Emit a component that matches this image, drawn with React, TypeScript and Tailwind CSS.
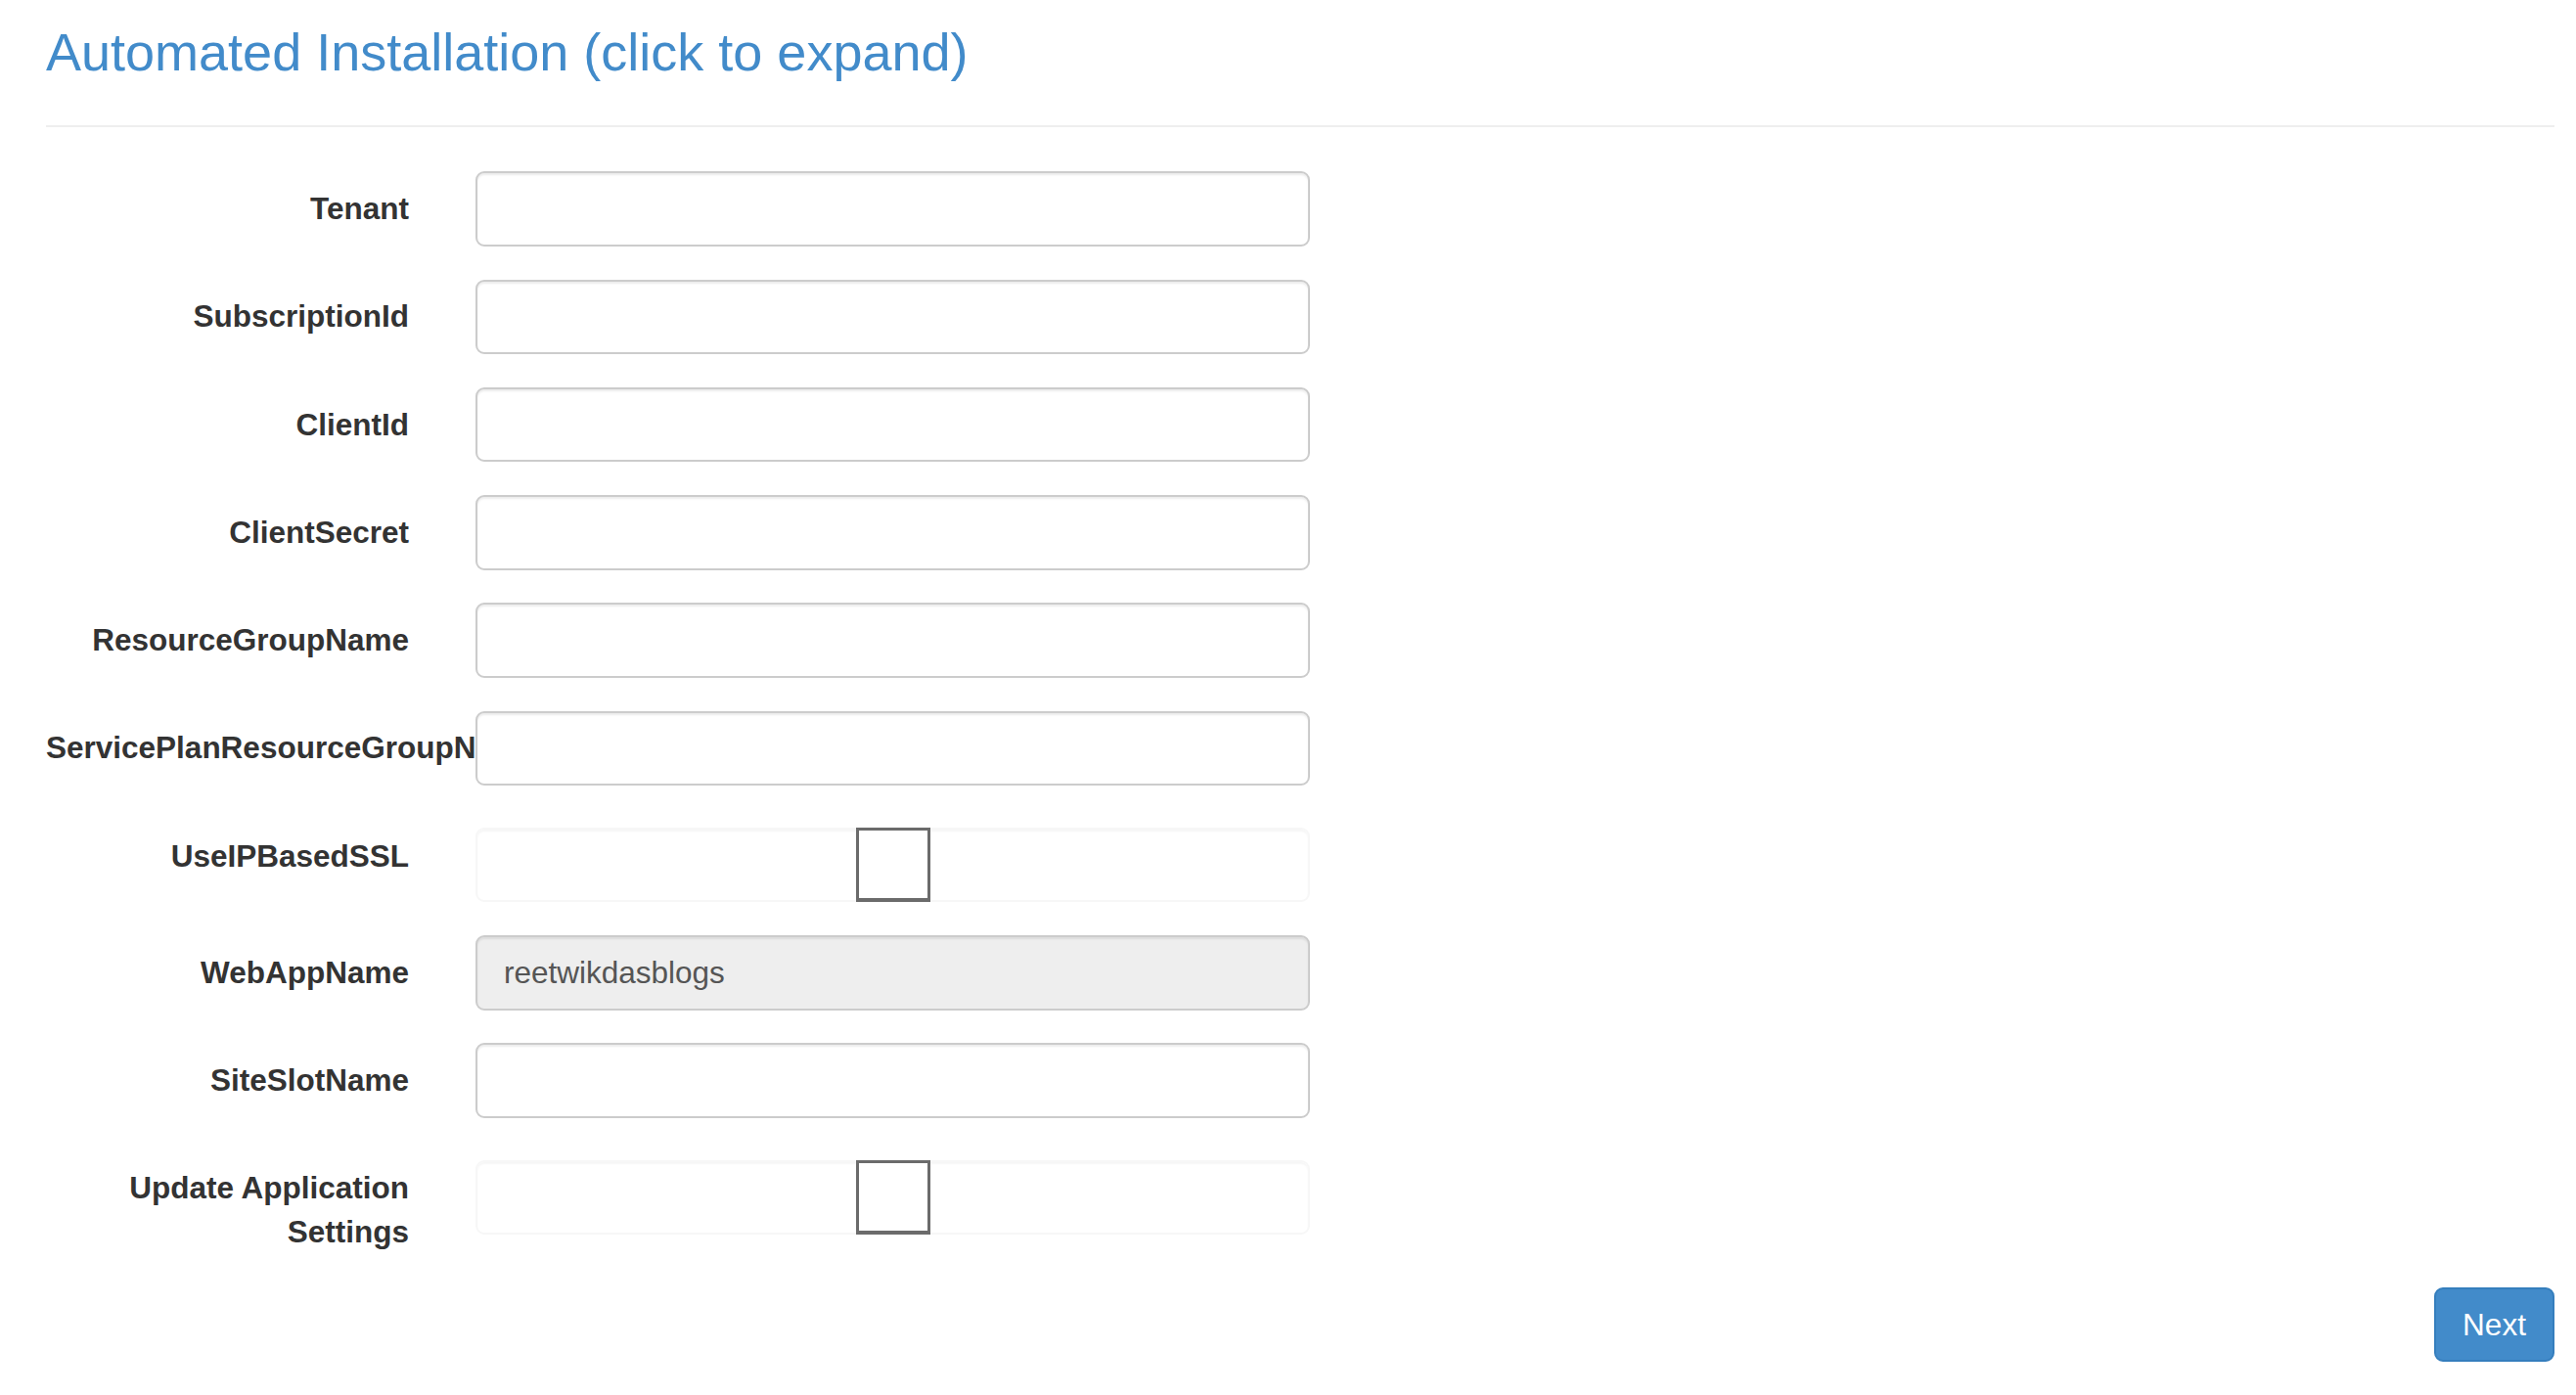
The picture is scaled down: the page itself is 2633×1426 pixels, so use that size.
type Field = {
  label: string;
  kind: "text" | "check";
  value?: string;
  readOnly?: boolean;
};

const fields: Field[] = [
  { label: "Tenant", kind: "text" },
  { label: "SubscriptionId", kind: "text" },
  { label: "ClientId", kind: "text" },
  { label: "ClientSecret", kind: "text" },
  { label: "ResourceGroupName", kind: "text" },
  { label: "ServicePlanResourceGroupName", kind: "text" },
  { label: "UseIPBasedSSL", kind: "check" },
  { label: "WebAppName", kind: "text", value: "reetwikdasblogs", readOnly: true },
  { label: "SiteSlotName", kind: "text" },
  { label: "Update Application Settings", kind: "check" },
];

function FormRow({ field }: { field: Field }) {
  return (
    <div className="flex items-start mb-[33.75px]">
      <label className="w-[405px] shrink-0 pr-[34px] pt-[15.75px] text-right text-[31.5px] leading-[45px] font-bold text-[#333]">
        {field.label}
      </label>
      <div className="relative w-[887px] pl-[34px]">
        {field.kind === "text" ? (
          <input
            type="text"
            readOnly={field.readOnly}
            defaultValue={field.value ?? ""}
            className={
              field.readOnly
                ? "block w-full h-[76.5px] px-[27px] rounded-[9px] border-2 border-[#ccc] bg-[#eee] text-[31.5px] text-[#555] shadow-[inset_0_2px_2px_rgba(0,0,0,0.075)] outline-none"
                : "block w-full h-[76.5px] px-[27px] rounded-[9px] border-2 border-[#ccc] bg-white text-[31.5px] text-[#555] shadow-[inset_0_2px_2px_rgba(0,0,0,0.075)] outline-none"
            }
          />
        ) : (
          <div className="mt-[9px] flex h-[76.5px] w-full justify-center rounded-[9px] border-2 border-[#f7f7f7] bg-white shadow-[inset_0_2px_2px_rgba(0,0,0,0.04)]">
            <div className="-mt-[2px] h-[76px] w-[76px] border-[3px] border-[#6b6b6b] border-b-[4px] bg-white" />
          </div>
        )}
      </div>
    </div>
  );
}

export default function App() {
  return (
    <div className="min-h-screen bg-white font-['Liberation_Sans',Arial,sans-serif]">
      <div className="ml-[47px] w-[2564px] pt-[24px]">
        <h3 className="text-[54px] leading-[1.1] text-[#428bca] cursor-pointer">
          Automated Installation (click to expand)
        </h3>
        <hr className="mt-[45px] mb-[45px] border-0 border-t-2 border-[#eee]" />
        <form>
          {fields.map((f) => (
            <FormRow key={f.label} field={f} />
          ))}
          <div className="flex justify-end">
            <button
              type="button"
              className="h-[76px] w-[123px] rounded-[9px] border-2 border-[#357ebd] bg-[#428bca] text-[31.5px] text-white"
            >
              Next
            </button>
          </div>
        </form>
      </div>
    </div>
  );
}
